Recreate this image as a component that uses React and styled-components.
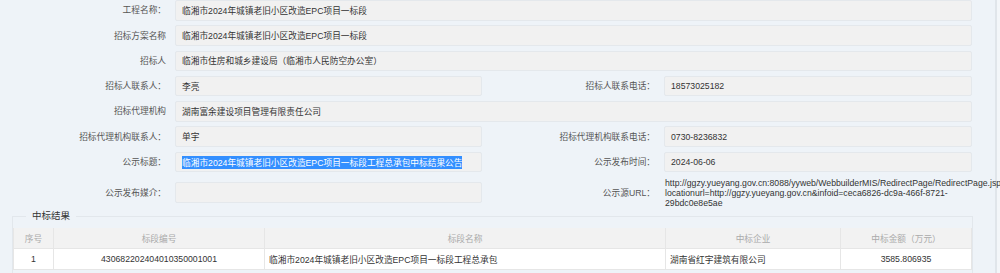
import styled, { createGlobalStyle } from 'styled-components';

const GlobalStyle = createGlobalStyle`
    html, body {
        margin: 0;
        padding: 0;
        background: #f3f6f9;
        overflow: hidden;
    }
    body {
        font-family: "Liberation Sans", "Noto Sans CJK SC", sans-serif;
        font-size: 8.7px;
        color: #333;
    }
`;

const fields = [
    { label: '工程名称：', value: '临湘市2024年城镇老旧小区改造EPC项目一标段' },
    { label: '招标方案名称', value: '临湘市2024年城镇老旧小区改造EPC项目一标段' },
    { label: '招标人', value: '临湘市住房和城乡建设局（临湘市人民防空办公室）' },
];

const results = [
    {
        no: '1',
        code: '430682202404010350001001',
        name: '临湘市2024年城镇老旧小区改造EPC项目一标段工程总承包',
        company: '湖南省红宇建筑有限公司',
        amount: '3585.806935',
    },
];

const App = () => {
    return (
        <Page>
            <GlobalStyle />
            <Main>
                <FormGrid>
                    {fields.map((f) => (
                        <>
                            <Label key={f.label}>{f.label}</Label>
                            <Field $wide>{f.value}</Field>
                        </>
                    ))}

                    <Label>招标人联系人：</Label>
                    <Field>李亮</Field>
                    <Label>招标人联系电话：</Label>
                    <Field>18573025182</Field>

                    <Label>招标代理机构</Label>
                    <Field $wide>湖南富余建设项目管理有限责任公司</Field>

                    <Label>招标代理机构联系人：</Label>
                    <Field>单宇</Field>
                    <Label>招标代理机构联系电话：</Label>
                    <Field>0730-8236832</Field>

                    <Label>公示标题：</Label>
                    <Field>
                        <Selected>临湘市2024年城镇老旧小区改造EPC项目一标段工程总承包中标结果公告</Selected>
                    </Field>
                    <Label>公示发布时间：</Label>
                    <Field>2024-06-06</Field>

                    <Label>公示发布媒介：</Label>
                    <Field />
                    <Label>公示源URL：</Label>
                    <UrlText>
                        <span>http://ggzy.yueyang.gov.cn:8088/yyweb/WebbuilderMIS/RedirectPage/RedirectPage.jsp?</span>
                        <span>locationurl=http://ggzy.yueyang.gov.cn&amp;infoid=ceca6826-dc9a-466f-8721-</span>
                        <span>29bdc0e8e5ae</span>
                    </UrlText>
                </FormGrid>

                <Results>
                    <legend>中标结果</legend>
                    <Table>
                        <thead>
                            <tr>
                                <Th $w={39}>序号</Th>
                                <Th $w={210}>标段编号</Th>
                                <Th $w={400}>标段名称</Th>
                                <Th $w={174}>中标企业</Th>
                                <Th $w={130}>中标金额（万元）</Th>
                            </tr>
                        </thead>
                        <tbody>
                            {results.map((r) => (
                                <tr key={r.code}>
                                    <Td $center>{r.no}</Td>
                                    <Td $center>{r.code}</Td>
                                    <Td>{r.name}</Td>
                                    <Td>{r.company}</Td>
                                    <Td $center>{r.amount}</Td>
                                </tr>
                            ))}
                        </tbody>
                    </Table>
                </Results>
            </Main>
        </Page>
    );
};

const Page = styled.div`
    display: flex;
    width: 1000px;
    height: 273px;
    overflow: hidden;
`;

const Main = styled.div`
    width: 995px;
    flex: none;
    background: #eef3f8;
    border-right: 2px solid #e0e5ea;
`;

const FormGrid = styled.div`
    display: grid;
    grid-template-columns: 166px 307px 164px 308px;
    column-gap: 9px;
    row-gap: 4.8px;
    align-items: center;
`;

const Label = styled.div`
    text-align: right;
    color: #555;
    white-space: nowrap;
    line-height: 12px;
`;

const Field = styled.div`
    grid-column: ${(p) => (p.$wide ? 'span 3' : 'auto')};
    height: 20.5px;
    box-sizing: border-box;
    background: #f1f1f1;
    border: 1px solid #e4e8ec;
    border-radius: 2px;
    padding: 0 6px;
    display: flex;
    align-items: center;
    color: #333;
    white-space: nowrap;
`;

const Selected = styled.span`
    background: #338fff;
    color: #fff;
`;

const UrlText = styled.div`
    display: flex;
    flex-direction: column;
    padding-left: 1px;
    line-height: 10px;
    white-space: nowrap;
    color: #333;
    padding-top: 1px;
`;

const Results = styled.fieldset`
    margin: 2px 0 0 12px;
    width: 960px;
    box-sizing: border-box;
    padding: 0 0 8px;
    border: 1px solid #e2e7ec;
    border-bottom: none;

    legend {
        margin-left: 13px;
        padding: 0 6px;
        font-size: 9.5px;
        line-height: 12px;
        color: #333;
    }
`;

const Table = styled.table`
    margin-top: 6px;
    width: 958px;
    border-collapse: collapse;
    table-layout: fixed;
`;

const Th = styled.th`
    width: ${(p) => p.$w}px;
    height: 20px;
    padding: 0;
    background: #f2f2f2;
    color: #aaa;
    font-weight: normal;
    text-align: center;
    border: 1px solid #e6e6e6;
    border-top: none;
`;

const Td = styled.td`
    height: 20px;
    padding: 0 4px;
    background: #fff;
    color: #333;
    text-align: ${(p) => (p.$center ? 'center' : 'left')};
    border: 1px solid #e6e6e6;
    white-space: nowrap;
`;

export default App;
